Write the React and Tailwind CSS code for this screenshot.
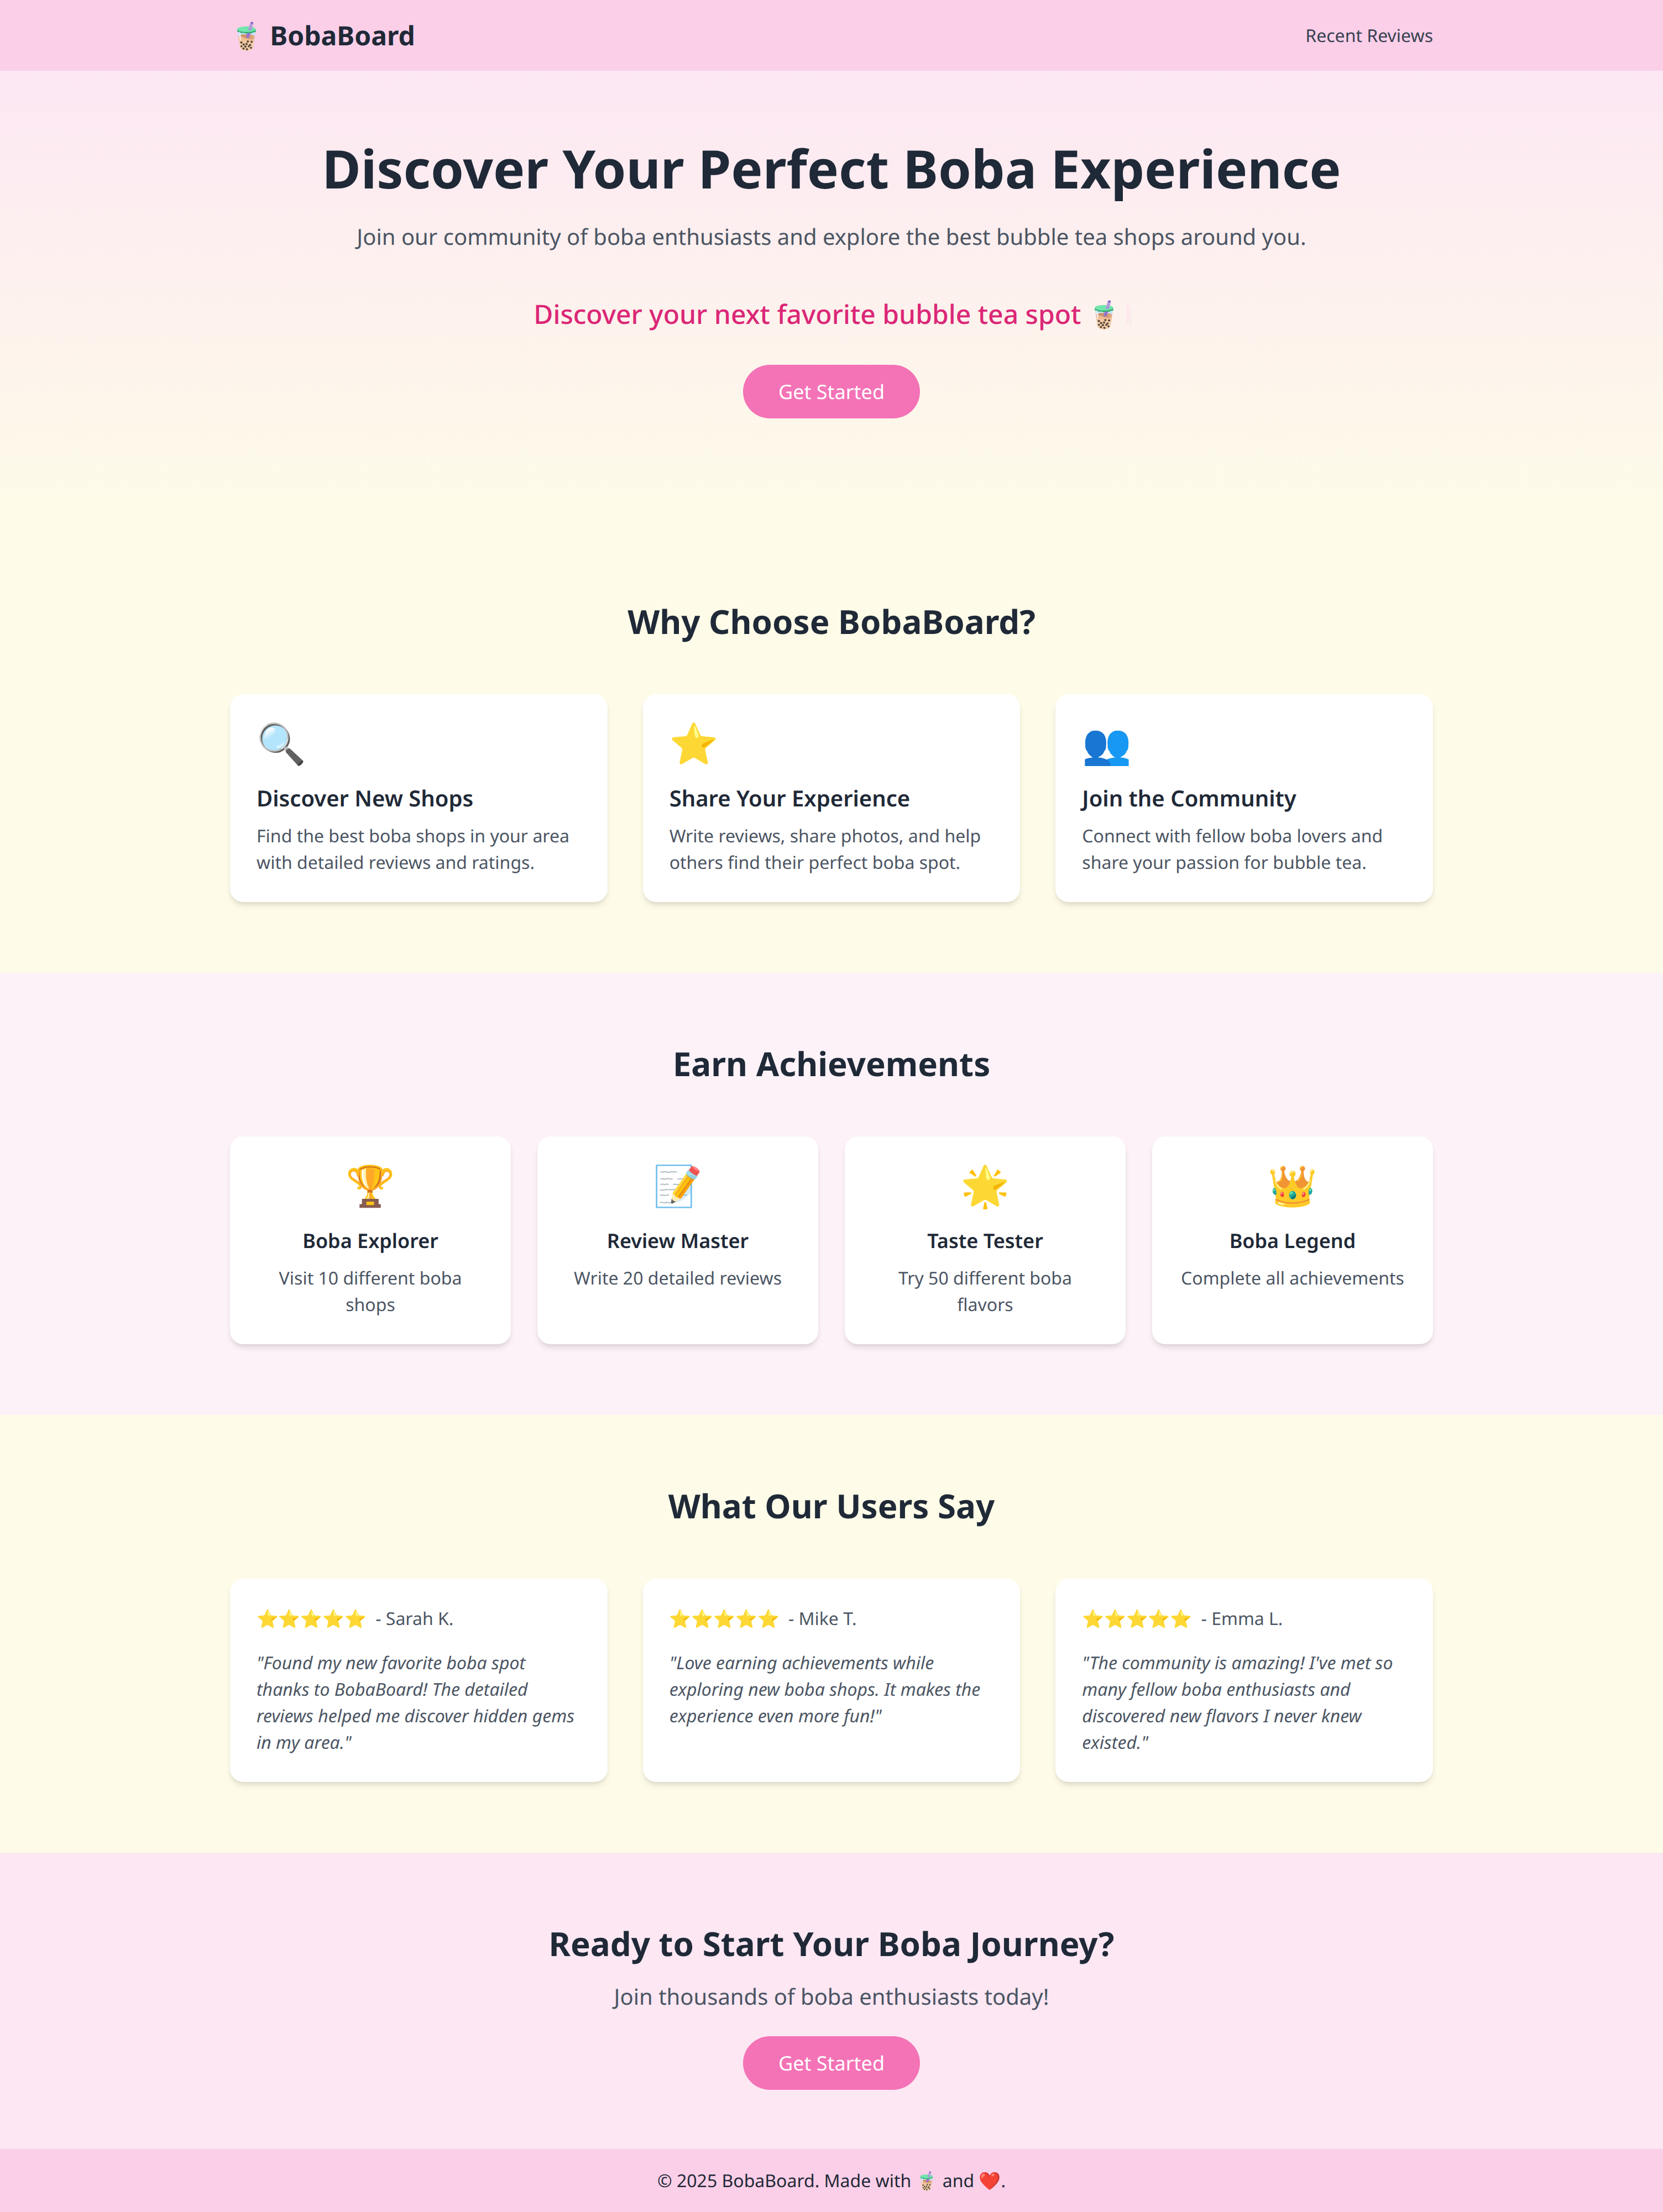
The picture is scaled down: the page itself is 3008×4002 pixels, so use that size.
const sans = 'font-["Noto_Sans",sans-serif] [text-rendering:geometricPrecision]';
const cardShadow = 'shadow-[0_8px_12px_-2px_rgba(0,0,0,0.1),0_4px_8px_-4px_rgba(0,0,0,0.1)]';

const features = [
  { icon: '🔍', title: 'Discover New Shops', text: 'Find the best boba shops in your area with detailed reviews and ratings.' },
  { icon: '⭐', title: 'Share Your Experience', text: 'Write reviews, share photos, and help others find their perfect boba spot.' },
  { icon: '👥', title: 'Join the Community', text: 'Connect with fellow boba lovers and share your passion for bubble tea.' },
];

const achievements = [
  { icon: '🏆', title: 'Boba Explorer', text: 'Visit 10 different boba shops' },
  { icon: '📝', title: 'Review Master', text: 'Write 20 detailed reviews' },
  { icon: '🌟', title: 'Taste Tester', text: 'Try 50 different boba flavors' },
  { icon: '👑', title: 'Boba Legend', text: 'Complete all achievements' },
];

const testimonials = [
  { name: 'Sarah K.', quote: '"Found my new favorite boba spot thanks to BobaBoard! The detailed reviews helped me discover hidden gems in my area."' },
  { name: 'Mike T.', quote: '"Love earning achievements while exploring new boba shops. It makes the experience even more fun!"' },
  { name: 'Emma L.', quote: '"The community is amazing! I\'ve met so many fellow boba enthusiasts and discovered new flavors I never knew existed."' },
];

function SectionTitle({ children }) {
  return <h2 className="text-center text-6xl leading-[72px] font-bold text-[#1f2937] mb-24">{children}</h2>;
}

function GetStarted() {
  return (
    <a className="inline-block align-top rounded-full bg-[#f472b6] px-16 py-6 text-4xl leading-[49px] text-white">
      Get Started
    </a>
  );
}

// mid-fade typing caret, left over from the typewriter effect
function Caret() {
  return (
    <span className="relative inline-block h-[38px] w-[15px]">
      <span className="absolute top-0 left-[9px] h-[38px] w-[6px] bg-[#fde8ec]" />
      <span className="absolute top-[11px] left-[16px] h-[33px] w-[2px] bg-[#f5ebe8]" />
    </span>
  );
}

export default function App() {
  return (
    <div className={`${sans} min-h-screen bg-white`}>
      <nav className="h-32 bg-[#fbcfe8]">
        <div className="mx-auto flex h-full w-[2176px] items-center justify-between">
          <span className="translate-y-px text-5xl leading-16 font-bold text-[#1f2937]">🧋 BobaBoard</span>
          <a className="translate-y-px text-[32px] leading-12 text-[#374151]">Recent Reviews</a>
        </div>
      </nav>

      <header className="h-[832px] bg-linear-to-b/srgb from-[#fce7f3] to-[#fefce8] pt-32 text-center">
        <h1 className="translate-y-px text-8xl leading-24 font-bold text-[#1f2937] mb-12">Discover Your Perfect Boba Experience</h1>
        <p className="text-[40px] leading-14 text-[#4b5563] mb-20">
          Join our community of boba enthusiasts and explore the best bubble tea shops around you.
        </p>
        <p className="translate-y-px text-5xl leading-16 text-[#db2777] font-medium mb-15">
          Discover your next favorite bubble tea spot 🧋
          <Caret />
        </p>
        <GetStarted />
      </header>

      <section className="bg-[#fefce8] py-32">
        <div className="mx-auto w-[2176px]">
          <SectionTitle>Why Choose BobaBoard?</SectionTitle>
          <div className="grid grid-cols-3 gap-16">
            {features.map((f) => (
              <div key={f.title} className={`rounded-3xl bg-white p-12 ${cardShadow}`}>
                <div className="text-7xl leading-20 mb-8">{f.icon}</div>
                <h3 className="text-[40px] leading-14 font-semibold text-[#1f2937] mb-4">{f.title}</h3>
                <p className="translate-y-px text-[32px] leading-12 text-[#4b5563]">{f.text}</p>
              </div>
            ))}
          </div>
        </div>
      </section>

      <section className="bg-[#fdf2f8] py-32">
        <div className="mx-auto w-[2176px]">
          <SectionTitle>Earn Achievements</SectionTitle>
          <div className="grid grid-cols-4 gap-12">
            {achievements.map((a) => (
              <div key={a.title} className={`rounded-3xl bg-white p-12 text-center ${cardShadow}`}>
                <div className="text-7xl leading-20 mb-8">{a.icon}</div>
                <h3 className="translate-y-px text-4xl leading-14 font-semibold text-[#1f2937] mb-4">{a.title}</h3>
                <p className="translate-y-px text-[32px] leading-12 text-[#4b5563]">{a.text}</p>
              </div>
            ))}
          </div>
        </div>
      </section>

      <section className="bg-[#fefce8] py-32">
        <div className="mx-auto w-[2176px]">
          <SectionTitle>What Our Users Say</SectionTitle>
          <div className="grid grid-cols-3 gap-16">
            {testimonials.map((t) => (
              <div key={t.name} className={`rounded-3xl bg-white p-12 ${cardShadow}`}>
                <div className="translate-y-px mb-8 flex items-center gap-4 text-[32px] leading-12 text-[#4b5563]">
                  <span>⭐⭐⭐⭐⭐</span>
                  <span>- {t.name}</span>
                </div>
                <p className="translate-y-px text-[32px] leading-12 italic text-[#4b5563]">{t.quote}</p>
              </div>
            ))}
          </div>
        </div>
      </section>

      <section className="h-[536px] bg-[#fce7f3] pt-32 text-center">
        <h2 className="text-6xl leading-[72px] font-bold text-[#1f2937] mb-8">Ready to Start Your Boba Journey?</h2>
        <p className="text-[40px] leading-14 text-[#4b5563] mb-11">Join thousands of boba enthusiasts today!</p>
        <GetStarted />
      </section>

      <footer className="bg-[#fbcfe8] py-[33px] text-center text-[32px] leading-12 text-[#1f2937]">
        <p className="translate-y-px">© 2025 BobaBoard. Made with 🧋 and ❤️.</p>
      </footer>
    </div>
  );
}
